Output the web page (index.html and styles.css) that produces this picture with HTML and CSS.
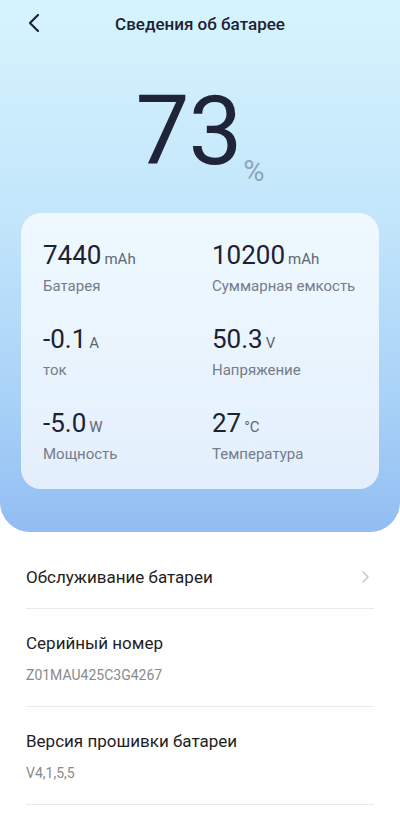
FILE: index.html
```html
<!DOCTYPE html>
<html lang="ru">
<head>
    <meta charset="UTF-8">
    <meta name="viewport" content="width=device-width, initial-scale=1.0">
    <title>Сведения об батарее</title>
    <link rel="stylesheet" href="styles.css">
</head>
<body>
    <div class="top">
        <header class="bar">
            <a class="back" href="#">
                <svg width="14" height="20" viewBox="0 0 14 20"><path d="M11 2 L3 10 L11 18" fill="none" stroke="#1c2133" stroke-width="2.2" stroke-linecap="round" stroke-linejoin="round"/></svg>
            </a>
            <h1>Сведения об батарее</h1>
        </header>

        <div class="level">73<span class="pct">%</span></div>

        <div class="card">
            <div class="item">
                <div class="val">7440<span class="unit">mAh</span></div>
                <div class="lbl">Батарея</div>
            </div>
            <div class="item">
                <div class="val">10200<span class="unit">mAh</span></div>
                <div class="lbl">Суммарная емкость</div>
            </div>
            <div class="item">
                <div class="val">-0.1<span class="unit">A</span></div>
                <div class="lbl">ток</div>
            </div>
            <div class="item">
                <div class="val">50.3<span class="unit">V</span></div>
                <div class="lbl">Напряжение</div>
            </div>
            <div class="item">
                <div class="val">-5.0<span class="unit">W</span></div>
                <div class="lbl">Мощность</div>
            </div>
            <div class="item">
                <div class="val">27<span class="unit">°C</span></div>
                <div class="lbl">Температура</div>
            </div>
        </div>
    </div>

    <ul class="list">
        <li class="row link">
            <span class="title">Обслуживание батареи</span>
            <svg width="10" height="14" viewBox="0 0 10 14"><path d="M3 2 L8 7 L3 12" fill="none" stroke="#c9c9c9" stroke-width="1.6" stroke-linecap="round" stroke-linejoin="round"/></svg>
        </li>
        <li class="row">
            <div class="title">Серийный номер</div>
            <div class="sub">Z01MAU425C3G4267</div>
        </li>
        <li class="row">
            <div class="title">Версия прошивки батареи</div>
            <div class="sub">V4,1,5,5</div>
        </li>
    </ul>
</body>
</html>
```

FILE: styles.css
```css
*{
    padding:0;
    margin:0;
    box-sizing: border-box;
}
body{
    width: 400px;
    background-color: #fff;
    font-family: Roboto, "Noto Sans", "Liberation Sans", sans-serif;
    color: #1c2133;
}
.top{
    height: 532px;
    padding: 0 21px;
    background: linear-gradient(180deg, #d6f4fd 0%, #c3e6fb 40%, #a9d2f7 75%, #92bdf2 100%);
    border-radius: 0 0 30px 30px;
}
.bar{
    position: relative;
    height: 46px;
    display: flex;
    align-items: center;
    justify-content: center;
}
.bar .back{
    position: absolute;
    left: 6px;
    top: 13px;
    display: flex;
}
.bar h1{
    font-size: 17px;
    font-weight: 500;
    color: #1c2133;
    padding-top: 2px;
}
.level{
    margin-top: 36px;
    height: 98px;
    text-align: center;
    font-size: 96px;
    line-height: 98px;
    font-weight: 400;
    color: #1f2438;
    letter-spacing: -1px;
}
.level .pct{
    font-size: 29px;
    line-height: 1;
    color: #8ea3bb;
    vertical-align: -17px;
    margin-left: 2px;
    letter-spacing: 0;
}
.card{
    margin-top: 33px;
    padding: 26px 0 25px 22px;
    background-color: rgba(255,255,255,0.72);
    border-radius: 20px;
    display: grid;
    grid-template-columns: 169px 1fr;
    row-gap: 27px;
}
.val{
    height: 32px;
    font-size: 26px;
    line-height: 32px;
    color: #1c2133;
}
.val .unit{
    font-size: 15px;
    line-height: 1;
    color: #5f6673;
    margin-left: 3px;
}
.lbl{
    margin-top: 5px;
    font-size: 15px;
    line-height: 20px;
    color: #767c88;
}
.list{
    list-style: none;
    margin-top: 13px;
    padding: 0 26px;
}
.row{
    border-bottom: 1px solid #ebebeb;
    padding: 22px 0 21px;
}
.row.link{
    height: 64px;
    padding: 0;
    display: flex;
    align-items: center;
    justify-content: space-between;
}
.row.link svg{
    margin-right: 4px;
}
.title{
    font-size: 17px;
    line-height: 24px;
    color: #1e1e1e;
}
.sub{
    margin-top: 10px;
    font-size: 14px;
    line-height: 20px;
    color: #8a8a8a;
}
```
